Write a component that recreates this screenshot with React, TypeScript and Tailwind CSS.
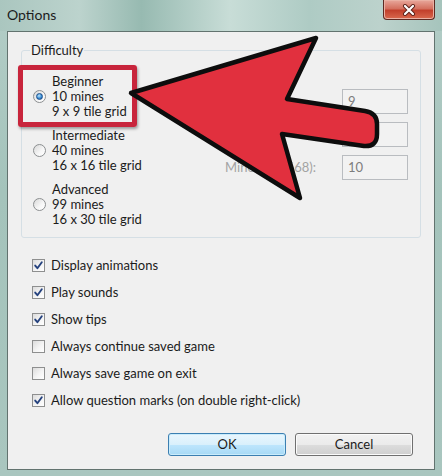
import React from "react";

const Radio = ({ checked }: { checked?: boolean }) => (
    <span className="flex h-[13px] w-[13px] shrink-0 items-center justify-center rounded-full border border-[#8c8f91] bg-[linear-gradient(135deg,#d8d8d8,#f7f7f7_60%,#ffffff)]">
        {checked && (
            <span className="h-[7px] w-[7px] rounded-full border border-[#1d4f8c] bg-[radial-gradient(circle_at_40%_35%,#bfe6fb,#3b8fd6_55%,#174f93)]" />
        )}
    </span>
);

const Checkbox = ({ checked }: { checked?: boolean }) => (
    <span className="flex h-[13px] w-[13px] shrink-0 items-center justify-center border border-[#8e8f8f] bg-[linear-gradient(135deg,#dcdcdc,#f4f4f4_55%,#ffffff)]">
        {checked && (
            <svg width="11" height="11" viewBox="0 0 11 11">
                <path d="M2.2 5.6 L4.4 8.2 L8.8 2.2" fill="none" stroke="#25427e" strokeWidth="1.9" strokeLinecap="round" strokeLinejoin="round" />
            </svg>
        )}
    </span>
);

const DifficultyOption = ({ name, mines, grid, checked }: { name: string; mines: string; grid: string; checked?: boolean }) => (
    <div className="flex items-center gap-[6px]">
        <Radio checked={checked} />
        <div className="flex flex-col leading-[15px]">
            <span>{name}</span>
            <span>{mines}</span>
            <span>{grid}</span>
        </div>
    </div>
);

const CustomField = ({ label, value }: { label?: string; value: string }) => (
    <div className="flex items-center justify-end gap-[26px]">
        {label && <span className="text-[#a3a3a3]">{label}</span>}
        <div className="flex h-[25px] w-[66px] items-center border border-[#b9bcc0] bg-[#f2f2f2] px-[5px] text-[#7d7d7d]">
            {value}
        </div>
    </div>
);

const WinButton = ({ label, focused }: { label: string; focused?: boolean }) => (
    <button
        className={
            focused
                ? "flex h-[23px] w-[118px] items-center justify-center rounded-[3px] border border-[#3c7fb1] bg-[linear-gradient(180deg,#eaf6fd,#d9f0fc_50%,#bee6fd_51%,#a7d9f5)] shadow-[inset_0_0_0_1px_#c9ecfc]"
                : "flex h-[23px] w-[118px] items-center justify-center rounded-[3px] border border-[#707070] bg-[linear-gradient(180deg,#f2f2f2,#ebebeb_50%,#dddddd_51%,#cfcfcf)] shadow-[inset_0_0_0_1px_#fbfbfb]"
        }
    >
        {label}
    </button>
);

const options = [
    { label: "Display animations", checked: true },
    { label: "Play sounds", checked: true },
    { label: "Show tips", checked: true },
    { label: "Always continue saved game", checked: false },
    { label: "Always save game on exit", checked: false },
    { label: "Allow question marks (on double right-click)", checked: true },
];

export default function App() {
    return (
        <div className="relative flex h-[476px] w-[442px] flex-col overflow-hidden bg-[linear-gradient(180deg,#b3cdc7,#a4c3bb_40%,#a9c6bf)] font-['Lato',sans-serif] text-[13px] text-[#1b1b1b]">
            {/* title bar */}
            <div className="flex h-[31px] shrink-0 justify-between bg-[linear-gradient(90deg,#aac6bf_0%,#bcd3cd_18%,#97bab1_32%,#c8ddd7_52%,#aecbc4_70%,#bcd2cc_86%,#a6c4bc_100%)]">
                <span className="pl-[7px] pt-[6px] text-[14px] leading-[18px] text-[#1c1c1c]">Options</span>
                <div className="mr-[7px] flex h-[20px] w-[52px] items-center justify-center rounded-b-[4px] border border-t-0 border-[#5e2a22] bg-[linear-gradient(180deg,#e8a89c,#d4705f_45%,#c2402c_55%,#d9694e)] shadow-[inset_0_0_0_1px_#eab1a4]">
                    <svg width="16" height="12" viewBox="0 0 16 12">
                        <path d="M4 2 L12 10 M12 2 L4 10" stroke="#5a2018" strokeWidth="4" strokeLinecap="round" />
                        <path d="M4 2 L12 10 M12 2 L4 10" stroke="#ffffff" strokeWidth="2.2" strokeLinecap="round" />
                    </svg>
                </div>
            </div>

            {/* client area */}
            <div className="mx-[7px] flex h-[439px] shrink-0 flex-col border border-[#62736f] bg-[#f0f0f0]">
                <fieldset className="mx-[13px] mt-[11px] rounded-[3px] border border-[#d5dfe5]">
                    <legend className="ml-[8px] px-[1px] leading-[15px]">Difficulty</legend>
                    <div className="flex justify-between pb-[10px] pl-[11px] pr-[12px] pt-[16px]">
                        <div className="flex flex-col gap-[9px]">
                            <DifficultyOption name="Beginner" mines="10 mines" grid="9 x 9 tile grid" checked />
                            <DifficultyOption name="Intermediate" mines="40 mines" grid="16 x 16 tile grid" />
                            <DifficultyOption name="Advanced" mines="99 mines" grid="16 x 30 tile grid" />
                        </div>
                        <div className="flex flex-col gap-[8px] pt-[15px]">
                            <CustomField value="9" />
                            <CustomField value="9" />
                            <CustomField label="Mines (10-668):" value="10" />
                        </div>
                    </div>
                </fieldset>

                <div className="mt-[14px] flex flex-col pl-[24px]">
                    {options.map((o) => (
                        <div key={o.label} className="flex h-[27px] items-center gap-[6px]">
                            <Checkbox checked={o.checked} />
                            <span>{o.label}</span>
                        </div>
                    ))}
                </div>

                <div className="mt-auto flex justify-end gap-[9px] pb-[13px] pr-[21px]">
                    <WinButton label="OK" focused />
                    <WinButton label="Cancel" />
                </div>
            </div>

            {/* annotation: highlight box */}
            <div className="pointer-events-none absolute left-[18px] top-[65px] h-[62px] w-[119px] rounded-[3px] border-[5px] border-[#c8253c] shadow-[1px_2px_3px_rgba(0,0,0,0.35)]" />

            {/* annotation: arrow */}
            <svg className="pointer-events-none absolute left-0 top-0" width="442" height="476" viewBox="0 0 442 476">
                <path
                    d="M131 93 L316 38 L287 99 L365 111 Q377 113 377 124 L377 134 Q377 147 364 146 L282 134 L300 198 Z"
                    fill="#e1303e"
                    stroke="#0d0d0d"
                    strokeWidth="4.5"
                    strokeLinejoin="round"
                />
            </svg>
        </div>
    );
}
